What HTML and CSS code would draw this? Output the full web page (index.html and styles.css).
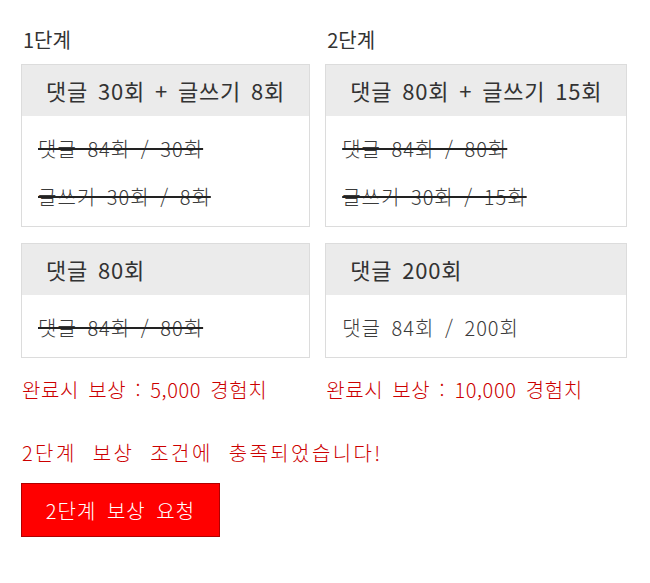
FILE: index.html
```html
<!DOCTYPE html>
<html lang="ko">
<head>
<meta charset="utf-8">
<title>단계 보상</title>
<link rel="stylesheet" href="styles.css">
</head>
<body>
<div class="page">
  <div class="stages">
    <section class="stage">
      <h3 class="stage-title">1단계</h3>
      <div class="mission">
        <div class="mission-head">댓글 30회 + 글쓰기 8회</div>
        <ul class="mission-body">
          <li class="done">댓글 84회 / 30회</li>
          <li class="done">글쓰기 30회 / 8회</li>
        </ul>
      </div>
      <div class="mission">
        <div class="mission-head">댓글 80회</div>
        <ul class="mission-body">
          <li class="done">댓글 84회 / 80회</li>
        </ul>
      </div>
      <p class="reward">완료시 보상 : 5,000 경험치</p>
    </section>
    <section class="stage">
      <h3 class="stage-title">2단계</h3>
      <div class="mission">
        <div class="mission-head">댓글 80회 + 글쓰기 15회</div>
        <ul class="mission-body">
          <li class="done">댓글 84회 / 80회</li>
          <li class="done">글쓰기 30회 / 15회</li>
        </ul>
      </div>
      <div class="mission">
        <div class="mission-head">댓글 200회</div>
        <ul class="mission-body">
          <li>댓글 84회 / 200회</li>
        </ul>
      </div>
      <p class="reward">완료시 보상 : 10,000 경험치</p>
    </section>
  </div>
  <p class="notice">2단계 보상 조건에 충족되었습니다!</p>
  <button class="claim" type="button">2단계 보상 요청</button>
</div>
</body>
</html>
```
FILE: styles.css
```css
html, body {
  margin: 0;
  padding: 0;
  background: #fff;
}
body {
  font-family: "Noto Sans CJK KR", "Noto Sans", sans-serif;
  color: #333;
}
.page {
  padding: 28px 0 0 21px;
}
.stages {
  display: flex;
  align-items: flex-start;
  gap: 15px;
}
.stage {
  display: flex;
  flex-direction: column;
}
.stage-title {
  margin: 0 0 12px 2px;
  font-size: 20px;
  font-weight: 400;
  line-height: 24px;
  height: 24px;
  color: #333;
}
.mission {
  border: 1px solid #dcdcdc;
  margin-bottom: 16px;
}
.mission + .mission {
  margin-bottom: 0;
}
.mission-head {
  background: #ebebeb;
  height: 51px;
  line-height: 51px;
  padding: 0 24px;
  font-size: 22px;
  white-space: nowrap;
  color: #333;
  letter-spacing: 0.8px;
  word-spacing: 3px;
}
.mission-body {
  list-style: none;
  margin: 0;
  padding: 9px 16px 5px;
}
.mission-body li {
  font-size: 20px;
  font-weight: 300;
  line-height: 48px;
  height: 48px;
  color: #3a3a3a;
  white-space: nowrap;
  letter-spacing: 1px;
  word-spacing: 4px;
}
.mission-body li.done {
  text-decoration: line-through;
  text-decoration-thickness: 2px;
  text-decoration-color: #222;
}
.reward {
  margin: 20px 0 0 1px;
  font-size: 20px;
  font-weight: 300;
  line-height: 24px;
  color: #cc0000;
  white-space: nowrap;
  letter-spacing: 0.6px;
  word-spacing: 3px;
}
.notice {
  margin: 39px 0 0 1px;
  font-size: 20px;
  font-weight: 300;
  line-height: 24px;
  color: #cc0000;
  letter-spacing: 2.4px;
  word-spacing: 8px;
}
.claim {
  display: block;
  margin: 18px 0 0 0;
  width: 199px;
  height: 54px;
  background: #ff0000;
  border: 1px solid #b00000;
  color: #fff;
  font-family: inherit;
  font-size: 20px;
  font-weight: 300;
  padding: 0;
  letter-spacing: 1px;
  word-spacing: 4px;
  cursor: pointer;
}
```
